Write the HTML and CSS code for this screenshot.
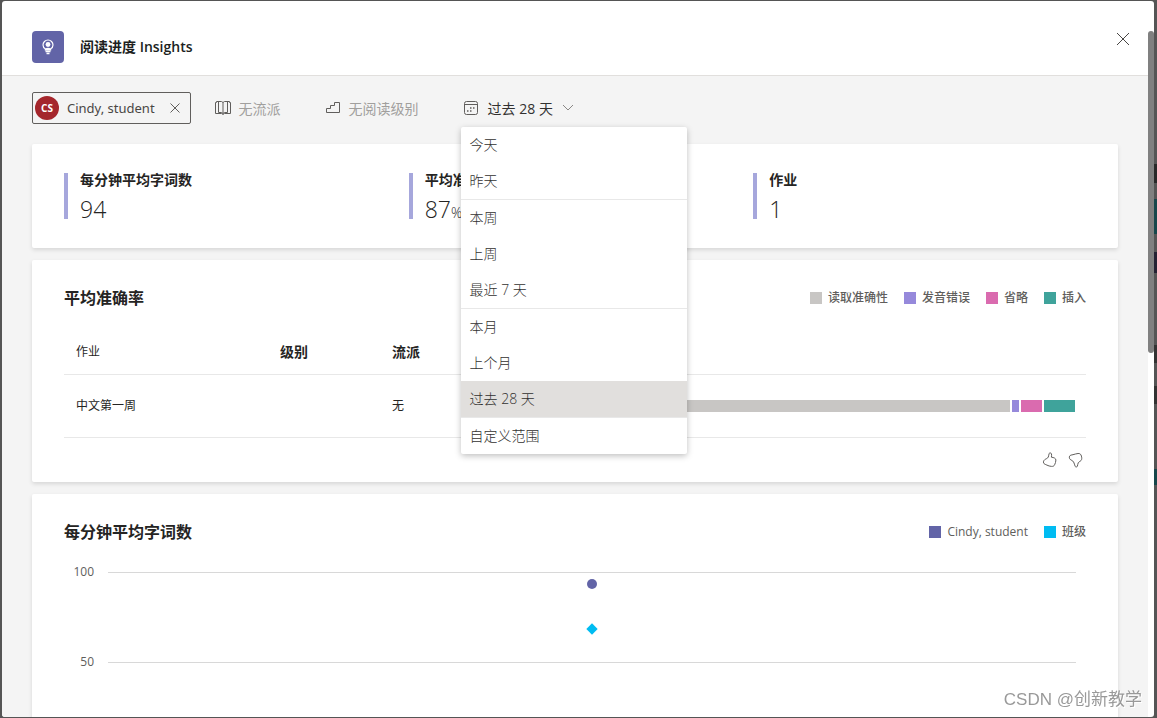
FILE: index.html
```html
<!DOCTYPE html>
<html lang="zh-CN">
<head>
<meta charset="utf-8">
<meta name="viewport" content="width=device-width, initial-scale=1">
<title>阅读进度 Insights</title>
<link rel="stylesheet" href="styles.css">
</head>
<body class="backdrop">
<div class="dialog" role="dialog" aria-labelledby="dialog-title">
  <div class="panel">
    <header class="header">
      <span class="logo">
        <svg width="16" height="16" viewBox="0 0 16 16" fill="none" stroke="#fff">
          <path d="M5.500 11V10C3.900 9.100 3 7.700 3 6a5 5 0 0 1 10 0c0 1.700-.9 3.100-2.500 4v1z" stroke-width="1.200"/>
          <circle cx="8" cy="5.500" r="2.400" fill="#fff" stroke="none"/>
          <path d="M5.500 10.500c.5-1.600 4.500-1.600 5 0zM5.500 12.500h5M6.500 14.500h3" fill="#fff" stroke-width="1.300"/>
        </svg>
      </span>
      <h1 class="title" id="dialog-title">阅读进度 Insights</h1>
      <button class="close" type="button" aria-label="关闭">
        <svg width="14" height="14" viewBox="0 0 14 14" stroke="#484644"><path d="M1 1l12 12M13 1L1 13"/></svg>
      </button>
    </header>
    <main class="content">
      <div class="toolbar">
        <div class="chip">
          <span class="avatar">CS</span>
          <span class="chip-name">Cindy, student</span>
          <button class="chip-remove" type="button" aria-label="移除">
            <svg width="10" height="10" viewBox="0 0 10 10" stroke="#605e5c"><path d="M.5.5l9 9M9.500.5l-9 9"/></svg>
          </button>
        </div>
        <div class="filters">
          <button class="filter" type="button" disabled>
            <svg width="16" height="16" viewBox="0 0 16 16" fill="none" stroke="#605e5c"><path d="M8 2.500v11M.5 2.500h1v-1h5L8 2.500l1.500-1h5v1h1v11h-6L8 14.500l-1.500-1h-6zM3.500 1.500v11h3L8 13.500l1.500-1h3v-11"/></svg>
            <span>无流派</span>
          </button>
          <button class="filter" type="button" disabled>
            <svg width="16" height="16" viewBox="0 0 16 16" fill="none" stroke="#605e5c"><path d="M14.500 2.500v10h-13v-4h4v-3h4v-3z"/></svg>
            <span>无阅读级别</span>
          </button>
          <div class="dropdown">
            <button class="filter filter-active" type="button" aria-haspopup="menu" aria-expanded="true">
              <svg width="16" height="16" viewBox="0 0 16 16" fill="none" stroke="#605e5c"><rect x="1.500" y="1.500" width="13" height="13" rx="2"/><path d="M1.500 4.500h13"/><path d="M7 8h1.500M10 8h1.500M4 11h1.500M7 11h1.500" stroke-width="1.500"/></svg>
              <span>过去 28 天</span>
              <svg width="12" height="8" viewBox="0 0 12 8" fill="none" stroke="#8a8886"><path d="M1 1l5 5 5-5"/></svg>
            </button>
            <div class="menu" role="menu">
              <div class="menu-group">
                <button class="menu-item" type="button" role="menuitem">今天</button>
                <button class="menu-item" type="button" role="menuitem">昨天</button>
              </div>
              <div class="menu-group">
                <button class="menu-item" type="button" role="menuitem">本周</button>
                <button class="menu-item" type="button" role="menuitem">上周</button>
                <button class="menu-item" type="button" role="menuitem">最近 7 天</button>
              </div>
              <div class="menu-group">
                <button class="menu-item" type="button" role="menuitem">本月</button>
                <button class="menu-item" type="button" role="menuitem">上个月</button>
                <button class="menu-item selected" type="button" role="menuitem">过去 28 天</button>
              </div>
              <div class="menu-group">
                <button class="menu-item" type="button" role="menuitem">自定义范围</button>
              </div>
            </div>
          </div>
        </div>
      </div>

      <section class="card stats">
        <div class="stat"><h2 class="stat-label">每分钟平均字词数</h2><p class="stat-value">94</p></div>
        <div class="stat"><h2 class="stat-label">平均准确率</h2><p class="stat-value">87<span class="unit">%</span></p></div>
        <div class="stat"><h2 class="stat-label">作业</h2><p class="stat-value">1</p></div>
      </section>

      <section class="card accuracy">
        <div class="card-head">
          <h2 class="card-title">平均准确率</h2>
          <ul class="legend">
            <li class="legend-item"><i class="swatch grey"></i>读取准确性</li>
            <li class="legend-item"><i class="swatch violet"></i>发音错误</li>
            <li class="legend-item"><i class="swatch pink"></i>省略</li>
            <li class="legend-item"><i class="swatch teal"></i>插入</li>
          </ul>
        </div>
        <table class="table">
          <thead>
            <tr><th class="col-work">作业</th><th class="col-meta">级别</th><th class="col-meta">流派</th><th></th></tr>
          </thead>
          <tbody>
            <tr>
              <td>中文第一周</td><td></td><td>无</td>
              <td class="cell-bar"><div class="bar"><span class="grey" style="flex-grow:506"></span><span class="violet" style="flex-grow:7"></span><span class="pink" style="flex-grow:21"></span><span class="teal" style="flex-grow:31"></span></div></td>
            </tr>
          </tbody>
        </table>
        <div class="feedback">
          <button class="thumb" type="button" aria-label="赞">
            <svg width="16" height="16" viewBox="0 0 16 16" fill="none" stroke="#605e5c" stroke-linejoin="round"><path d="M7.200 1.400c.4-.8 2-.6 2.300.5.200 1.200 0 2.300-.1 3.300 2.400.3 4.400 1 4.500 2.800 0 1.800-.6 3.300-1.300 4.800-.6 1.400-1.600 1.700-3.100 1.600-1.700-.2-3.100-.5-4.600-1.300C3.300 12.400 2 12 1.600 11c-.4-1.300.1-2.500 1.200-3.400C4 6.700 5.600 6.500 6.300 5c.5-1.100.4-2.500.9-3.600z"/></svg>
          </button>
          <button class="thumb" type="button" aria-label="踩">
            <svg width="16" height="16" viewBox="0 0 16 16" fill="none" stroke="#605e5c" stroke-linejoin="round"><path d="M7.200 14.400c.4.800 1.800.8 2.200-.2.400-1.200.3-2.500.9-3.500 1-1.300 2.900-1.600 3.300-3.200.4-1.500 0-3.100-.6-4.500-.6-1.200-1.600-1.600-3-1.500-1.900.1-3.400.9-5 1.200-1.400.3-2.800.3-3.400 1.400-.5 1.200-.3 2.500.6 3.300 1 .8 2.500 1.200 3.400 2.600.8 1.300.9 3 1.600 4.400z"/></svg>
          </button>
        </div>
      </section>

      <section class="card wpm">
        <div class="card-head">
          <h2 class="card-title">每分钟平均字词数</h2>
          <ul class="legend">
            <li class="legend-item"><i class="swatch indigo"></i>Cindy, student</li>
            <li class="legend-item"><i class="swatch cyan"></i>班级</li>
          </ul>
        </div>
        <div class="chart">
          <div class="axis"><span>100</span><span>50</span></div>
          <div class="plot">
            <i class="point point-student" style="top:13%"></i>
            <i class="point point-class" style="top:63%"></i>
          </div>
        </div>
      </section>
    </main>
  </div>
  <div class="rail"><div class="rail-thumb"></div></div>
</div>
<div class="watermark">CSDN @创新教学</div>
</body>
</html>
```
FILE: styles.css
```css
* { box-sizing: border-box; }

body, h1, h2, p, ul { margin: 0; padding: 0; }

button {
  border: 0;
  padding: 0;
  background: none;
  color: inherit;
  font: inherit;
  display: flex;
  align-items: center;
}

.backdrop {
  height: 100vh;
  padding: 1px 3px 1px 2px;
  overflow: hidden;
  background:
    linear-gradient(#555 0 164px, #292929 164px 183px, #555 183px 199px, #17474b 199px 234px, #555 234px 252px, #252233 252px 273px, #555 273px 345px, #333 345px 363px, #555 363px 386px, #333 386px 404px, #555 404px 469px, #17474b 469px 485px, #555 485px) right / 3px 100% no-repeat
    #555;
  color: #252423;
  font: 14px/20px "Open Sans", "Noto Sans CJK SC", sans-serif;
}

.dialog {
  display: flex;
  height: 100%;
  overflow: hidden;
  border-radius: 3px;
  background: #fff;
}

.panel {
  flex: 1;
  min-width: 0;
  display: flex;
  flex-direction: column;
}

.header {
  flex: none;
  display: flex;
  align-items: center;
  gap: 16px;
  padding: 30px 18px 12px 30px;
  border-bottom: 1px solid #e1dfdd;
}

.logo {
  width: 32px;
  height: 32px;
  display: grid;
  place-items: center;
  border-radius: 4px;
  background: #6264a7;
}

.title { font-size: 14px; font-weight: 600; color: #201f1e; }

.close { margin-left: auto; align-self: flex-start; height: 16px; }

.content {
  flex: 1;
  min-height: 0;
  display: flex;
  flex-direction: column;
  gap: 12px;
  padding: 16px 30px 0;
  overflow: hidden;
  background: #f4f4f4;
}

.toolbar { flex: none; display: flex; align-items: center; gap: 24px; margin-bottom: 8px; }

.chip {
  display: flex;
  align-items: center;
  height: 32px;
  padding: 0 10px 0 2px;
  border: 1px solid #605e5c;
  border-radius: 2px;
  color: #484644;
}

.avatar {
  width: 24px;
  height: 24px;
  border-radius: 50%;
  background: #a4262c;
  color: #fff;
  font-size: 10px;
  font-weight: 700;
  line-height: 24px;
  text-align: center;
}

.chip-name { margin: 0 15px 0 8px; font-family: "Noto Sans", sans-serif; font-size: 13px; }

.filters { display: flex; align-items: center; gap: 44px; }
.filter { gap: 8px; height: 32px; color: #a19f9d; white-space: nowrap; }
.filter span { padding-top: 2px; }
.filter-active { gap: 9px; color: #323130; }
.dropdown { position: relative; }

.menu {
  position: absolute;
  z-index: 2;
  top: 35px;
  left: -2px;
  width: 226px;
  border-radius: 2px;
  background: #fff;
  box-shadow: 0 2px 6px rgba(0, 0, 0, .25);
  color: #323130;
  font-weight: 300;
}

.menu-group + .menu-group { border-top: 1px solid #e8e8e8; }
.menu-item { width: 100%; height: 36px; padding: 0 9px; }
.menu-item.selected { background: #e1dfdd; }

.card {
  flex: none;
  border-radius: 2px;
  background: #fff;
  box-shadow: 0 2px 4px rgba(0, 0, 0, .12);
}

.stats {
  display: grid;
  grid-template-columns: repeat(3, 1fr);
  gap: 12px;
  padding: 29px 32px;
}

.stat { height: 46px; padding-left: 12px; border-left: 4px solid #a6a7dc; }
.stat-label { font-size: 14px; line-height: 14px; font-weight: 600; }
.stat-value { padding-top: 6px; font-size: 23px; line-height: 32px; font-weight: 300; }
.unit { font-size: 14px; }

.accuracy { padding: 26px 32px 14px; }
.wpm { height: 260px; padding: 26px 32px; }

.card-head { display: flex; align-items: center; justify-content: space-between; height: 24px; }
.card-title { font-size: 16px; font-weight: 600; }

.legend {
  display: flex;
  gap: 16px;
  list-style: none;
  color: #605e5c;
  font-size: 12px;
  font-weight: 500;
}

.legend-item { display: flex; align-items: center; gap: 6px; }
.swatch { width: 12px; height: 12px; }
.grey { background: #c8c6c4; }
.violet { background: #9689db; }
.pink { background: #da6baf; }
.teal { background: #3fa39b; }
.indigo { background: #6264a7; }
.cyan { background: #00bcf2; }

.table {
  width: 100%;
  margin-top: 20px;
  border-collapse: collapse;
  table-layout: fixed;
  font-size: 12px;
}

.table th, .table td {
  height: 63px;
  padding: 0 12px;
  border-bottom: 1px solid #e8e8e8;
  text-align: left;
}

.table th { height: 44px; font-size: 14px; font-weight: 600; }
.table .col-work { width: 204px; font-size: 12px; font-weight: 400; }
.col-meta { width: 112px; }
.table .cell-bar { padding-right: 11px; }
.bar { display: flex; gap: 2px; height: 12px; }

.feedback { display: flex; justify-content: flex-end; gap: 10px; padding: 14px 2px 0 0; }

.chart { display: flex; gap: 14px; padding-right: 10px; margin-top: 28px; }

.axis {
  width: 30px;
  height: 90px;
  display: flex;
  flex-direction: column;
  justify-content: space-between;
  color: #605e5c;
  font-size: 12px;
  line-height: 0;
  text-align: right;
}

.plot {
  position: relative;
  flex: 1;
  height: 91px;
  border-top: 1px solid #d8d8d8;
  border-bottom: 1px solid #d8d8d8;
}

.point { position: absolute; left: 50%; translate: -50% -50%; }
.point-student { width: 10px; height: 10px; border-radius: 50%; background: #6264a7; }
.point-class { width: 8px; height: 8px; rotate: 45deg; background: #00bcf2; }

.rail { flex: none; width: 6px; padding-top: 30px; }
.rail-thumb { height: 47%; border-radius: 3px; background: #808080; }

.watermark {
  position: fixed;
  right: 15px;
  bottom: 6px;
  color: #999;
  font-size: 17px;
  line-height: 24px;
  font-family: "Liberation Sans", "Noto Sans CJK SC", sans-serif;
  text-shadow: 1px 1px 0 #fff;
}
```
